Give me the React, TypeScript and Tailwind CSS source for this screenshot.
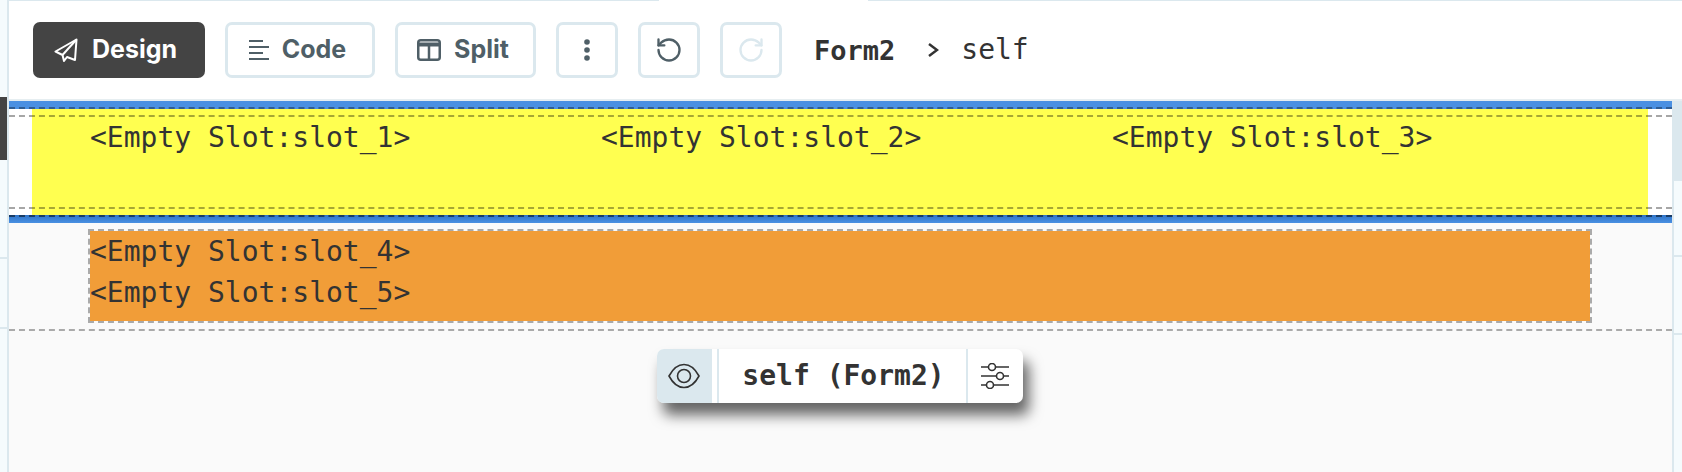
import { ReactNode } from 'react'
import { RotateCcw, RotateCw } from 'lucide-react'

function PlaneIcon() {
  return (
    <svg width="24" height="24" viewBox="0 0 24 24" fill="none" stroke="currentColor" strokeWidth="2" strokeLinejoin="round">
      <path d="M22.5 1.5 1.5 13.5l7 3.5 1.5 6 3-4 8 3z" />
      <path d="M22.5 1.5 8.5 17" />
    </svg>
  )
}

function LinesIcon() {
  return (
    <svg width="20" height="20" viewBox="0 0 20 20" fill="none" stroke="currentColor" strokeWidth="2">
      <path d="M0 1h14M0 7h20M0 13h14M0 19h20" />
    </svg>
  )
}

function SplitIcon() {
  return (
    <svg width="24" height="22" viewBox="0 0 24 22" fill="none" stroke="currentColor" strokeWidth="2.5">
      <rect x="1.25" y="1.25" width="21.5" height="19.5" rx="2.5" />
      <path d="M1 5.5h22" strokeWidth="4" />
      <path d="M12 5v16" />
    </svg>
  )
}

function DotsIcon() {
  return (
    <svg width="6" height="22" viewBox="0 0 6 22" fill="currentColor">
      <circle cx="3" cy="3" r="2.8" />
      <circle cx="3" cy="11" r="2.8" />
      <circle cx="3" cy="19" r="2.8" />
    </svg>
  )
}

function EyeIcon() {
  return (
    <svg width="32" height="26" viewBox="0 0 32 26" fill="none" stroke="#333333" strokeWidth="1.6">
      <path d="M1 13C5 5.5 10 1.5 16 1.5S27 5.5 31 13c-4 7.5-9 11.5-15 11.5S5 20.500 1 13z" />
      <circle cx="16" cy="13" r="6.500" />
    </svg>
  )
}

function SlidersIcon() {
  return (
    <svg width="28" height="26" viewBox="0 0 28 26" fill="none" stroke="#333333" strokeWidth="1.6">
      <path d="M0 4h7M15 4h13M0 13h15M23 13h5M0 22h5M13 22h15" />
      <circle cx="11" cy="4" r="3.500" />
      <circle cx="19" cy="13" r="3.500" />
      <circle cx="9" cy="22" r="3.500" />
    </svg>
  )
}

function ToolButton({ icon, label, className }: { icon: ReactNode; label: string; className: string }) {
  return (
    <button className={`h-14 pr-[5px] flex items-center justify-center gap-[13px] rounded-[7px] border-[3px] border-[#dbe8ee] text-[#4f5f67] text-[25px] font-bold font-['Inter',sans-serif] ${className}`}>
      {icon}
      {label}
    </button>
  )
}

function SquareButton({ children, className = 'text-[#4f5f67]' }: { children: ReactNode; className?: string }) {
  return (
    <button className={`w-[62px] h-14 flex items-center justify-center rounded-[7px] border-[3px] border-[#dbe8ee] ${className}`}>
      {children}
    </button>
  )
}

function DashedRule({ className }: { className: string }) {
  return <div className={`absolute left-0 right-0 h-0 border-t-2 border-dashed ${className}`} />
}

export default function App() {
  return (
    <div className="h-[472px] flex overflow-hidden bg-white font-['DejaVu_Sans_Mono',monospace] text-[#333333]">
      {/* left rail */}
      <div className="w-[9px] shrink-0 flex flex-col bg-[#f5fbfd] border-r-2 border-[#dbe8ee]">
        <div className="h-[97px]" />
        <div className="h-[63px] bg-[#444444]" />
        <div className="h-[97px]" />
        <div className="h-[2px] bg-[#dbe8ee]" />
        <div className="h-[68px]" />
        <div className="h-[2px] bg-[#dbe8ee]" />
      </div>

      <div className="flex-1 flex flex-col min-w-0">
        {/* top hairline, broken over the canvas tab */}
        <div className="h-px flex shrink-0">
          <div className="w-[650px] bg-[#dbe8ee]" />
          <div className="w-[209px]" />
          <div className="flex-1 bg-[#dbe8ee]" />
        </div>

        {/* toolbar */}
        <div className="h-[98px] shrink-0 flex items-center gap-5 pl-6">
          <button className="w-[172px] h-14 pr-[7px] flex items-center justify-center gap-[14px] rounded-[7px] bg-[#444444] text-white text-[25px] font-bold font-['Inter',sans-serif]">
            <PlaneIcon />
            Design
          </button>
          <ToolButton icon={<LinesIcon />} label="Code" className="w-[150px]" />
          <ToolButton icon={<SplitIcon />} label="Split" className="w-[141px]" />
          <SquareButton><DotsIcon /></SquareButton>
          <SquareButton><RotateCcw size={28} strokeWidth={2} /></SquareButton>
          <SquareButton className="text-[#dbe8ee]"><RotateCw size={28} strokeWidth={2} /></SquareButton>
          <div className="flex items-center ml-[12px] text-[27px] leading-none">
            <span className="font-bold">Form2</span>
            <svg className="ml-[32px] mr-[22px]" width="12" height="16" viewBox="0 0 12 16" fill="none" stroke="#333333" strokeWidth="2.500">
              <path d="M2 2l8 6-8 6" />
            </svg>
            <span className="text-[28px]">self</span>
          </div>
        </div>
        <div className="h-[2px] shrink-0 bg-[#e6eef1]" />

        <div className="flex-1 flex min-h-0">
          {/* canvas */}
          <div className="flex-1 min-w-0 bg-[#fafafa] flex flex-col">
            <div className="relative shrink-0">
              <div className="h-2 bg-[#4a90e2]" />
              <div className="bg-white pl-[23px] pr-[24px]">
                <div className="h-[106px] bg-[#ffff50] grid grid-cols-[511px_511px_511px] pl-[58px] text-[28px] leading-[41px] pt-[8px]">
                  <div>&lt;Empty Slot:slot_1&gt;</div>
                  <div>&lt;Empty Slot:slot_2&gt;</div>
                  <div>&lt;Empty Slot:slot_3&gt;</div>
                </div>
              </div>
              <div className="h-2 bg-gradient-to-b from-[#2f74c8] to-[#4a90e2]" />
              <DashedRule className="top-[6px] border-black/35" />
              <DashedRule className="top-[14px] border-black/35" />
              <DashedRule className="bottom-[14px] border-black/35" />
              <DashedRule className="bottom-[6px] border-black/50" />
            </div>

            <div className="ml-[79px] mt-[6px] w-[1504px] h-[94px] shrink-0 border-2 border-dashed border-[#aaaaaa] bg-[#f19d38] bg-clip-padding text-[28px] leading-[41px]">
              <div>&lt;Empty Slot:slot_4&gt;</div>
              <div>&lt;Empty Slot:slot_5&gt;</div>
            </div>

            <div className="mt-[6px] border-t-2 border-dashed border-[#aaaaaa]" />

            {/* component pill */}
            <div className="mt-[18px] flex justify-center pr-[2px]">
              <div className="w-[366px] h-[54px] flex items-stretch rounded-[7px] bg-white overflow-hidden shadow-[6px_12px_14px_rgba(0,0,0,0.6)]">
                <div className="w-[55px] flex items-center justify-center bg-[#dbe8ee]"><EyeIcon /></div>
                <div className="w-[7px] border-r-2 border-[#dbe8ee]" />
                <div className="flex-1 pl-[3px] flex items-center justify-center text-[28px] font-bold">self (Form2)</div>
                <div className="w-[57px] flex items-center justify-center border-l-2 border-[#dbe8ee]"><SlidersIcon /></div>
              </div>
            </div>
          </div>

          {/* right rail */}
          <div className="w-[10px] shrink-0 flex flex-col bg-[#dbe8ee]">
            <div className="h-[80px]" />
            <div className="flex-1 ml-[2px] flex flex-col bg-[#f5fbfd]">
              <div className="h-[74px]" />
              <div className="h-[2px] bg-[#dbe8ee]" />
              <div className="h-[76px]" />
              <div className="h-[2px] bg-[#dbe8ee]" />
            </div>
          </div>
        </div>
      </div>
    </div>
  )
}
